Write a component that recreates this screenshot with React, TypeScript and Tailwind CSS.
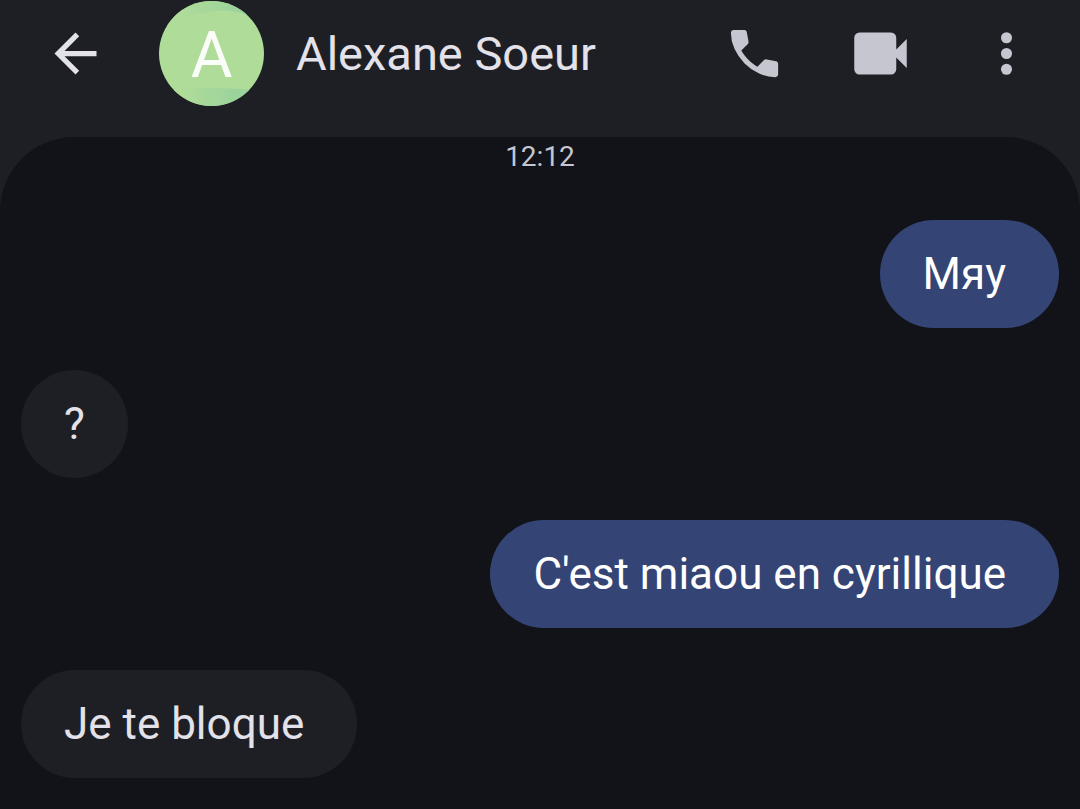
import clsx from "clsx";

type Message = {
  id: number;
  text: string;
  mine: boolean;
};

const messages: Message[] = [
  { id: 1, text: "Мяу", mine: true },
  { id: 2, text: "?", mine: false },
  { id: 3, text: "C'est miaou en cyrillique", mine: true },
  { id: 4, text: "Je te bloque", mine: false },
];

function BackIcon() {
  return (
    <svg viewBox="0 0 24 24" fill="currentColor" className="size-[63px]" aria-hidden="true">
      <path d="M20 11H7.83l5.59-5.59L12 4l-8 8 8 8 1.41-1.41L7.83 13H20v-2z" />
    </svg>
  );
}

function PhoneIcon() {
  return (
    <svg viewBox="0 0 24 24" fill="currentColor" className="size-[63px]" aria-hidden="true">
      <path d="M19.95 21q-3.125 0-6.175-1.362t-5.55-3.863-3.862-5.55T3 4.05q0-.45.3-.75t.75-.3H8.1q.35 0 .625.238t.325.562l.65 3.5q.05.4-.025.675T9.4 8.45L6.975 10.9q.5.925 1.187 1.787t1.513 1.663q.775.775 1.625 1.438T13.1 17l2.35-2.35q.225-.225.588-.337t.712-.063l3.45.7q.35.1.575.363T21 15.9v4.05q0 .45-.3.75t-.75.3z" />
    </svg>
  );
}

function VideoIcon() {
  return (
    <svg viewBox="0 0 24 24" fill="currentColor" className="size-[63px]" aria-hidden="true">
      <path d="M4 4h12a2 2 0 0 1 2 2v4.5l4-4v11l-4-4V18a2 2 0 0 1-2 2H4a2 2 0 0 1-2-2V6a2 2 0 0 1 2-2z" />
    </svg>
  );
}

function MoreIcon() {
  return (
    <svg viewBox="0 0 24 24" fill="currentColor" className="size-[63px]" aria-hidden="true">
      <circle cx="12" cy="6" r="2.1" />
      <circle cx="12" cy="12" r="2.1" />
      <circle cx="12" cy="18" r="2.1" />
    </svg>
  );
}

function Avatar({ letter }: { letter: string }) {
  return (
    <div className="relative grid size-[105px] shrink-0 place-items-center overflow-hidden rounded-full bg-[#b0dc99] pt-1">
      <svg viewBox="0 0 105 105" className="absolute inset-0 size-full" aria-hidden="true">
        <defs>
          <linearGradient id="shade" x1="0" x2="1" y1="0" y2="0">
            <stop offset="0.2" stopColor="#b0dc99" />
            <stop offset="0.75" stopColor="#9bd39c" />
          </linearGradient>
        </defs>
        <path d="M0 0h105v22Q84 9 60 9.500Q32 12 14 25L0 25z" fill="url(#shade)" />
        <path d="M0 90Q50 84 105 90V105H0z" fill="url(#shade)" />
      </svg>
      <span className="relative text-[64px] leading-none text-[#fbfdf9]">{letter}</span>
    </div>
  );
}

function Bubble({ message }: { message: Message }) {
  const single = message.text.length === 1;

  return (
    <li
      className={clsx(
        "flex min-h-[108px] min-w-[107px] items-center rounded-[54px] py-6 text-[44px] leading-[60px]",
        single ? "justify-center px-10" : "pr-[53px] pl-[43px]",
        message.mine ? "self-end bg-[#344575] text-white" : "self-start bg-[#1e1f24] text-[#e3e1e9]"
      )}
    >
      {message.text}
    </li>
  );
}

export default function App() {
  return (
    <div className="flex min-h-dvh flex-col bg-[#1e1f24] font-['Roboto',sans-serif]">
      {/* Header */}
      <header className="flex items-center pt-px pr-[42px] pb-[31px] pl-[44px] text-[#c6c6d0]">
        <button type="button" aria-label="Retour" className="text-[#e3e1e9]">
          <BackIcon />
        </button>
        <div className="ml-[52px] flex min-w-0 flex-1 items-center gap-8">
          <Avatar letter="A" />
          <h1 className="truncate text-[47px] leading-[60px] text-[#e3e1e9]">Alexane Soeur</h1>
        </div>
        <div className="flex shrink-0 gap-[63px]">
          <button type="button" aria-label="Appeler">
            <PhoneIcon />
          </button>
          <button type="button" aria-label="Appel vidéo">
            <VideoIcon />
          </button>
          <button type="button" aria-label="Plus d'options">
            <MoreIcon />
          </button>
        </div>
      </header>

      {/* Conversation */}
      <main className="flex-1 rounded-t-[74px] bg-[#121318] px-[21px] pb-[31px]">
        <time className="block text-center text-[28px] leading-[40px] text-[#c6c6d0]">12:12</time>
        <ul className="mt-[43px] flex flex-col gap-[42px]">
          {messages.map((m) => (
            <Bubble key={m.id} message={m} />
          ))}
        </ul>
      </main>
    </div>
  );
}
